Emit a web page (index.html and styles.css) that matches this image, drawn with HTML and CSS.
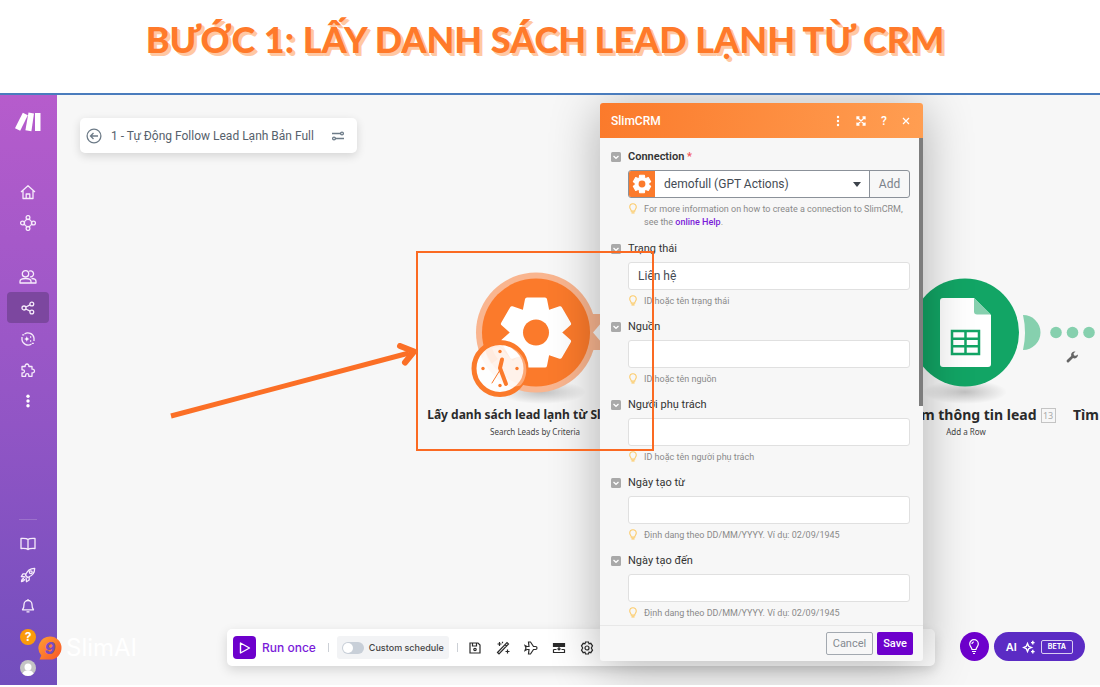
FILE: index.html
```html
<!DOCTYPE html>
<html lang="vi">
<head>
    <meta charset="UTF-8">
    <meta name="viewport" content="width=device-width, initial-scale=1.0">
    <title>Bước 1: Lấy danh sách lead lạnh từ CRM</title>
    <link rel="stylesheet" href="styles.css">
</head>
<body>
    <svg class="defs" aria-hidden="true">
        <symbol id="gear" viewBox="-38 -38 76 76">
            <g fill="#fff" stroke="#fff" stroke-width="4" stroke-linejoin="round">
                <circle r="22"/>
                <path d="M-9-33H9L12-18V18L9 33H-9L-12 18V-18z"/>
                <path d="M-9-33H9L12-18V18L9 33H-9L-12 18V-18z" transform="rotate(60)"/>
                <path d="M-9-33H9L12-18V18L9 33H-9L-12 18V-18z" transform="rotate(120)"/>
            </g>
            <circle r="13" fill="#fb7a2b"/>
        </symbol>
        <symbol id="bulb" viewBox="0 0 10 14">
            <path d="M3 9.500C3 7.500 1.200 7 1.200 4.600a3.800 3.800 0 0 1 7.600 0C8.800 7 7 7.500 7 9.500z" fill="none" stroke="#fccb6b" stroke-width="1.300"/>
            <path d="M3.200 11.500h3.600" stroke="#fccb6b" stroke-width="1.600"/>
        </symbol>
        <symbol id="chevron" viewBox="0 0 10 10">
            <rect width="10" height="10" rx="1.500" fill="#a9a9a9"/>
            <path d="M2.500 4l2.500 2.300L7.500 4" fill="none" stroke="#fff" stroke-width="1.300"/>
        </symbol>
    </svg>

    <header class="page-header">
        <h1 class="title">BƯỚC 1: LẤY DANH SÁCH LEAD LẠNH TỪ CRM</h1>
    </header>

    <main class="app">
        <nav class="sidebar" aria-label="Menu">
            <a href="#" class="logo" aria-label="Make">
                <svg width="28" height="20" viewBox="0 0 28 20" fill="#fff">
                    <path d="M8.800 .8l5 2.400-7.600 15.500L1 16.200z"/>
                    <path d="M14.500 .5l5.500 1-2.600 17.800-6-1.100z"/>
                    <path d="M21 1h5.500v18H21z"/>
                </svg>
            </a>
            <a href="#" class="nav-item" aria-label="Home">
                <svg width="16" height="16" viewBox="0 0 16 16"><path d="M1 8l7-6.300L15 8M3 6.500v8h10v-8M6.200 14.500V10h3.600v4.500"/></svg>
            </a>
            <a href="#" class="nav-item" aria-label="Organization">
                <svg width="16" height="16" viewBox="0 0 16 16"><circle cx="8" cy="8" r="3.600"/><circle cx="8" cy="2.500" r="1.900"/><circle cx="8" cy="13.500" r="1.900"/><circle cx="2.500" cy="8" r="1.900"/><circle cx="13.500" cy="8" r="1.900"/></svg>
            </a>
            <a href="#" class="nav-item group-start" aria-label="Team">
                <svg width="18" height="16" viewBox="0 0 18 16"><circle cx="6.500" cy="4.800" r="3.200"/><path d="M1 14v-1.500c0-2 2-3 5.500-3s5.500 1 5.500 3V14zM10 2.300a3 3 0 1 1 1 5.500M12.500 9.500c3 0 4.500 1 4.500 3V14h-5"/></svg>
            </a>
            <a href="#" class="nav-item active" aria-label="Scenarios">
                <svg width="14" height="14" viewBox="0 0 14 14"><circle cx="3" cy="7" r="2"/><circle cx="10.800" cy="3" r="1.900"/><circle cx="10.800" cy="11" r="1.900"/><path d="M4.800 6l4.300-2.100M4.800 8l4.300 2.100"/></svg>
            </a>
            <a href="#" class="nav-item" aria-label="AI Agents">
                <svg width="14" height="14" viewBox="0 0 14 14"><path d="M3.500 2A6.200 6.200 0 0 1 13 6v3M10.500 12A6.200 6.200 0 0 1 1 8V5"/><path d="M5.800 4.300l.8 1.900 1.900.8-1.900.8-.8 1.900-.8-1.900L3.100 7 5 6.200z" fill="#fff" stroke="none"/><path d="M1.200 2.800h2M10.800 11.300h2M9 5h1.200M9 9h1.200"/></svg>
            </a>
            <a href="#" class="nav-item" aria-label="Templates">
                <svg width="16" height="16" viewBox="0 0 16 16"><path d="M2 4.500h3.200a1.900 1.900 0 1 1 3.600 0H12V7.200a1.900 1.900 0 1 1 0 3.600v3.500H8.800v-1a1.600 1.600 0 0 0-3.200 0v1H2v-3.500h1a1.500 1.500 0 0 0 0-3H2z"/></svg>
            </a>
            <a href="#" class="nav-item" aria-label="More">
                <svg width="4" height="14" viewBox="0 0 4 14"><g fill="#fff" stroke="none"><circle cx="2" cy="2.200" r="1.700"/><circle cx="2" cy="7" r="1.700"/><circle cx="2" cy="11.800" r="1.700"/></g></svg>
            </a>
            <div class="nav-bottom">
                <a href="#" class="nav-item" aria-label="Docs">
                    <svg width="16" height="14" viewBox="0 0 16 14"><path d="M8 2.500C7 1.500 5 1.300 1 1.500v10c4-.2 6 0 7 1 1-1 3-1.200 7-1v-10c-4-.2-6 0-7 1zM8 2.500v10"/></svg>
                </a>
                <a href="#" class="nav-item" aria-label="What's new">
                    <svg width="16" height="16" viewBox="0 0 16 16"><path d="M5.500 8.300C7 4 10 1.200 14.700 1.300c.1 4.700-2.700 7.700-7 9.200zM6.200 6.800H3L1.300 9.500l4 .5M9.200 9.800V13l-2.700 1.700L6 10.700"/><circle cx="10.800" cy="5.200" r="1.400"/><path d="M4 11.500c-1.500 0-2.300 1.500-2.500 3 1.500-.2 3-1 3-2.500"/></svg>
                </a>
                <a href="#" class="nav-item" aria-label="Notifications">
                    <svg width="14" height="16" viewBox="0 0 14 16"><path d="M1.500 11.800c1-1 1.500-2 1.500-5.300a4 4 0 0 1 8 0c0 3.300.5 4.300 1.500 5.300zM5.500 13.800h3M7 1v1.500"/></svg>
                </a>
                <a href="#" class="nav-item" aria-label="Help"><span class="help-badge">?</span></a>
                <a href="#" class="nav-item" aria-label="Profile">
                    <svg width="16" height="16" viewBox="0 0 16 16"><g stroke="none"><circle cx="8" cy="8" r="8" fill="#c4c4c4"/><circle cx="8" cy="7" r="3.500" fill="#fff"/><path d="M2.500 13.800C3.500 11 5.500 10.300 8 10.300s4.500.7 5.500 3.500A8 8 0 0 1 8 16a8 8 0 0 1-5.500-2.200z" fill="#fff"/></g></svg>
                </a>
            </div>
        </nav>

        <section class="canvas">
            <div class="scenario-bar">
                <button class="icon-btn" aria-label="Back">
                    <svg width="16" height="16" viewBox="0 0 16 16" fill="none" stroke="#6d7b88" stroke-width="1.300"><circle cx="8" cy="8" r="6.900"/><path d="M12 8H4.500M7.500 5l-3 3 3 3"/></svg>
                </button>
                <span class="scenario-name">1 - Tự Động Follow Lead Lạnh Bản Full</span>
                <button class="icon-btn" aria-label="Options">
                    <svg width="14" height="10" viewBox="0 0 14 10" fill="none" stroke="#6d7b88" stroke-width="1.300"><path d="M1 2.500h9M4 7.500h9"/><circle cx="11" cy="2.500" r="1.400"/><circle cx="3" cy="7.500" r="1.400"/></svg>
                </button>
            </div>

            <!-- scenario modules -->
            <div class="module module-crm">
                <svg width="260" height="140" viewBox="405 265 260 140">
                    <defs>
                        <radialGradient id="shade"><stop offset="0" stop-color="#000" stop-opacity=".22"/><stop offset="1" stop-color="#000" stop-opacity="0"/></radialGradient>
                    </defs>
                    <ellipse cx="542" cy="392" rx="44" ry="12" fill="url(#shade)"/>
                    <path d="M588 314h25v36h-25z" fill="#f9b58f"/>
                    <circle cx="536" cy="332.500" r="60" fill="#f9b58f"/>
                    <path d="M593 332.500l12-14v28z" fill="#f7f7f7"/>
                    <circle cx="536" cy="332.500" r="54" fill="#fb7a2b"/>
                    <use href="#gear" x="498" y="294.500" width="76" height="76"/>
                    <circle cx="500" cy="368.500" r="26" fill="#fff" fill-opacity=".85" stroke="#fb7a2b" stroke-width="5"/>
                    <path d="M481 360a54 54 0 0 0 20 21c8 5 15 7 20 4a24 24 0 0 0-17-39l-4 0c5 5 10 8 18 10l-5 5-13-14-8 1c2 5 3 8 6 11l-7 5c-3-4-5-8-5-13z" fill="#fff" fill-opacity=".35"/>
                    <g fill="#fb7a2b"><circle cx="500" cy="351.500" r="1.700"/><circle cx="517" cy="368.500" r="1.700"/><circle cx="500" cy="385.500" r="1.700"/><circle cx="483" cy="368.500" r="1.700"/></g>
                    <g fill="none" stroke="#fb7a2b" stroke-linecap="round"><path d="M502 359.500l-2 8.500 6 16" stroke-width="4" stroke-linejoin="round"/><path d="M500 370l-8 13" stroke-width="1"/></g>
                </svg>
                <div class="module-name">Lấy danh sách lead lạnh từ SlimCRM</div>
                <div class="module-action">Search Leads by Criteria</div>
            </div>

            <div class="module module-sheets">
                <svg width="260" height="140" viewBox="836 265 260 140">
                    <ellipse cx="965" cy="392" rx="42" ry="12" fill="url(#shade)"/>
                    <circle cx="965" cy="332.500" r="54" fill="#12a565"/>
                    <path d="M943 298h31l17 17v49a3 3 0 0 1-3 3h-45a3 3 0 0 1-3-3v-63a3 3 0 0 1 3-3z" fill="#fff"/>
                    <path d="M974 298l17 16.500h-14a3 3 0 0 1-3-3z" fill="#86d0ae"/>
                    <path d="M952 331h27v23h-27zM952 338.700h27M952 346.300h27M965.500 331v23" fill="none" stroke="#12a565" stroke-width="2.500"/>
                    <path d="M1023 315a17.500 17.500 0 0 1 0 35q4-17.500 0-35z" fill="#86d0ae"/>
                    <g fill="#86d0ae"><circle cx="1056" cy="332.500" r="5.800"/><circle cx="1072.500" cy="332.500" r="5.800"/><circle cx="1089" cy="332.500" r="5.800"/></g>
                    <path d="M1078 354.500a3.600 3.600 0 0 1-5 3.600l-4 4a1.300 1.300 0 0 1-2-2l4.200-4a3.600 3.600 0 0 1 4.300-4.500l-2 2 .5 1.800 1.800.3z" fill="#666"/>
                </svg>
                <div class="module-name">Thêm thông tin lead<span class="module-id">13</span></div>
                <div class="module-action">Add a Row</div>
            </div>

            <div class="module module-next">
                <div class="module-name">Tìm</div>
            </div>

            <!-- bottom toolbar -->
            <div class="toolbar">
                <button class="run-btn">
                    <span class="run-icon"><svg width="12" height="14" viewBox="0 0 12 14" fill="none" stroke="#fff" stroke-width="1.400" stroke-linejoin="round"><path d="M1.500 2l9 5-9 5z"/></svg></span>
                    Run once
                </button>
                <span class="divider"></span>
                <label class="schedule">
                    <input type="checkbox" class="switch">
                    Custom schedule
                </label>
                <span class="divider"></span>
                <div class="tools">
                    <button class="icon-btn" aria-label="Save scenario"><svg width="14" height="14" viewBox="0 0 14 14"><path d="M2 2h8l2 2v8H2zM4.500 2v3h4V2"/><circle cx="7" cy="8.500" r="1.200"/></svg></button>
                    <button class="icon-btn" aria-label="Auto-align"><svg width="14" height="14" viewBox="0 0 14 14"><path d="M1.500 11.500l9.500-10 1.500 1.500-9.500 10zM9 3.500L10.500 5M3.500 1v4M1.500 3h4M6.500.8v1.500M11.500 8.500v4M9.500 10.500h4"/></svg></button>
                    <button class="icon-btn" aria-label="Explain flow"><svg width="14" height="14" viewBox="0 0 14 14"><path d="M1 4.500l2 1h2L4.500 1h2l3 4.500h2c2 0 2 3 0 3h-2l-3 4.500h-2L5 8.500H3l-2 1L2 7z"/></svg></button>
                    <button class="icon-btn" aria-label="Notes"><svg width="14" height="14" viewBox="0 0 14 14"><path d="M1.500 2.500h11v3h-11z" fill="#2b2b2b"/><path d="M7 5v3.500M5.500 7.500L7 9l1.500-1.500M1.500 8.500h3M9.500 8.500h3M1.500 8.500v3h11v-3"/></svg></button>
                    <button class="icon-btn" aria-label="Settings"><svg width="14" height="14" viewBox="0 0 14 14"><path d="M5.500 1h3l.5 1.800 1.800-.5 1.700 2.500L11.300 7l1.200 2.200-1.700 2.500-1.800-.5-.5 1.800h-3L5 11.200l-1.800.5-1.700-2.500L2.700 7 1.500 4.800l1.700-2.500 1.800.5z"/><circle cx="7" cy="7" r="2"/></svg></button>
                </div>
            </div>

            <div class="assist">
                <button class="tips-btn" aria-label="Tips">
                    <svg width="12" height="16" viewBox="0 0 12 16" fill="none" stroke="#fff" stroke-width="1.200"><path d="M4 10.500C4 8.500 1.700 7.500 1.700 5a4.300 4.300 0 0 1 8.600 0c0 2.500-2.300 3.500-2.300 5.500zM4 12.500h4M5 14.500h2M4 5a2 2 0 0 1 2-2"/></svg>
                </button>
                <button class="ai-btn">
                    AI
                    <svg width="14" height="14" viewBox="0 0 14 14" fill="none" stroke="#fff" stroke-width="1.400"><path d="M5.500 3.500L6.700 6.300l2.800 1.200-2.800 1.200-1.200 2.800-1.200-2.800L1.500 7.500l2.800-1.200z"/><path d="M10.800.8v3.600M9 2.600h3.600M10.800 9.800v3.600M9 11.600h3.600"/></svg>
                    <span class="beta">BETA</span>
                </button>
            </div>

            <!-- module settings -->
            <form class="dialog">
                <div class="dialog-header">
                    <h2 class="dialog-title">SlimCRM</h2>
                    <button type="button" class="icon-btn" aria-label="Menu"><svg width="4" height="12" viewBox="0 0 4 12" fill="#fff"><circle cx="2" cy="2" r="1.200"/><circle cx="2" cy="6" r="1.200"/><circle cx="2" cy="10" r="1.200"/></svg></button>
                    <button type="button" class="icon-btn" aria-label="Expand"><svg width="10" height="10" viewBox="0 0 10 10" fill="none" stroke="#fff" stroke-width="1.300"><path d="M1 3.500V1h2.500M6.500 1H9v2.500M9 6.500V9H6.500M3.500 9H1V6.500M1 1l8 8M9 1L1 9"/></svg></button>
                    <button type="button" class="icon-btn" aria-label="Help">?</button>
                    <button type="button" class="icon-btn" aria-label="Close"><svg width="8" height="8" viewBox="0 0 8 8" stroke="#fff" stroke-width="1.200"><path d="M1 1l6 6M7 1L1 7"/></svg></button>
                </div>
                <div class="dialog-body">
                    <div class="field">
                        <svg class="chevron" width="10" height="10"><use href="#chevron"/></svg>
                        <label class="field-label required" for="connection">Connection</label>
                        <div class="connection">
                            <span class="connection-icon"><svg width="20" height="20"><use href="#gear"/></svg></span>
                            <select id="connection" class="connection-select">
                                <option>demofull (GPT Actions)</option>
                            </select>
                            <button type="button" class="add-btn">Add</button>
                        </div>
                        <p class="hint"><svg width="10" height="12"><use href="#bulb"/></svg><span>For more information on how to create a connection to SlimCRM, see the <a href="#">online Help</a>.</span></p>
                    </div>
                    <div class="field">
                        <svg class="chevron" width="10" height="10"><use href="#chevron"/></svg>
                        <label class="field-label" for="status">Trạng thái</label>
                        <input type="text" class="field-input" id="status" value="Liên hệ">
                        <p class="hint"><svg width="10" height="12"><use href="#bulb"/></svg><span>ID hoặc tên trạng thái</span></p>
                    </div>
                    <div class="field">
                        <svg class="chevron" width="10" height="10"><use href="#chevron"/></svg>
                        <label class="field-label" for="source">Nguồn</label>
                        <input type="text" class="field-input" id="source">
                        <p class="hint"><svg width="10" height="12"><use href="#bulb"/></svg><span>ID hoặc tên nguồn</span></p>
                    </div>
                    <div class="field">
                        <svg class="chevron" width="10" height="10"><use href="#chevron"/></svg>
                        <label class="field-label" for="owner">Người phụ trách</label>
                        <input type="text" class="field-input" id="owner">
                        <p class="hint"><svg width="10" height="12"><use href="#bulb"/></svg><span>ID hoặc tên người phụ trách</span></p>
                    </div>
                    <div class="field">
                        <svg class="chevron" width="10" height="10"><use href="#chevron"/></svg>
                        <label class="field-label" for="date-from">Ngày tạo từ</label>
                        <input type="text" class="field-input" id="date-from">
                        <p class="hint"><svg width="10" height="12"><use href="#bulb"/></svg><span>Định dang theo DD/MM/YYYY. Ví dụ: 02/09/1945</span></p>
                    </div>
                    <div class="field">
                        <svg class="chevron" width="10" height="10"><use href="#chevron"/></svg>
                        <label class="field-label" for="date-to">Ngày tạo đến</label>
                        <input type="text" class="field-input" id="date-to">
                        <p class="hint"><svg width="10" height="12"><use href="#bulb"/></svg><span>Định dang theo DD/MM/YYYY. Ví dụ: 02/09/1945</span></p>
                    </div>
                    <span class="scroll-thumb"></span>
                </div>
                <div class="dialog-footer">
                    <button type="button" class="cancel-btn">Cancel</button>
                    <button type="submit" class="save-btn">Save</button>
                </div>
            </form>

            <!-- annotations -->
            <div class="highlight"></div>
            <svg class="arrow" width="250" height="76" viewBox="168 343 250 76" fill="none" stroke="#fb6f26">
                <path d="M171 416l238-63" stroke-width="5"/>
                <path d="M400 346l14 5.500-9 11" stroke-width="6" stroke-linecap="round" stroke-linejoin="round"/>
            </svg>
        </section>

        <div class="watermark">
            <svg width="24" height="24" viewBox="0 0 24 24">
                <defs><linearGradient id="flame" x1="0" y1="0" x2="1" y2="1"><stop offset="0" stop-color="#ffa030"/><stop offset="1" stop-color="#f9552b"/></linearGradient></defs>
                <path d="M12 .5A11.500 11.500 0 1 1 12 23.500H1.500l1.800-4A11.500 11.500 0 0 1 12 .5z" fill="url(#flame)"/>
                <text x="12" y="18" class="watermark-nine">9</text>
            </svg>
            <span>SlimAI</span>
        </div>
    </main>
</body>
</html>
```
FILE: styles.css
```css
* {
    margin: 0;
    padding: 0;
    box-sizing: border-box;
}

body {
    font-family: Inter, 'Liberation Sans', sans-serif;
    background: #fff;
    min-height: 100vh;
    display: flex;
    flex-direction: column;
    color: #333;
    overflow: hidden;
}

button {
    font-family: inherit;
    border: none;
    background: none;
    cursor: pointer;
}

svg {
    display: block;
    flex-shrink: 0;
}

.defs {
    position: absolute;
    width: 0;
    height: 0;
}

.page-header {
    height: 95px;
    padding: 17px 10px 0 0;
    border-bottom: 2px solid #4a7cbd;
    text-align: center;
}

.title {
    font-family: Lato, sans-serif;
    font-size: 36px;
    line-height: 44px;
    font-weight: 900;
    color: #ff7a2a;
    text-shadow: 2px 2px 0 #ffc8a3, 3px 3px 0 #ffc8a3;
    white-space: nowrap;
}

.app {
    flex: 1;
    display: flex;
    position: relative;
    margin-bottom: 2px;
}

/* sidebar */
.sidebar {
    width: 57px;
    display: flex;
    flex-direction: column;
    padding: 16px 8px 2px 7px;
    background: linear-gradient(180deg, #b65ccc 0%, #9556c6 50%, #724ebd 100%);
}

.logo {
    height: 65px;
    padding: 1px 0 0 7px;
}

.nav-item {
    height: 31px;
    display: flex;
    align-items: center;
    justify-content: center;
    border-radius: 4px;
    text-decoration: none;
}

.nav-item svg {
    fill: none;
    stroke: #f6ebfb;
    stroke-width: 1.3;
    stroke-linejoin: round;
}

.nav-item.group-start {
    margin-top: 23px;
}

.nav-item.active {
    background: #7c479f;
}

.nav-bottom {
    margin-top: auto;
}

.nav-bottom::before {
    content: '';
    display: block;
    width: 18px;
    height: 1px;
    margin: 0 auto 8px;
    background: #9c71cb;
}

.help-badge {
    width: 16px;
    height: 16px;
    border-radius: 50%;
    background: #fb9a0b;
    color: #fff;
    font-size: 12px;
    line-height: 16px;
    font-weight: 700;
    text-align: center;
}

/* canvas */
.canvas {
    flex: 1;
    position: relative;
    overflow: hidden;
    background: #f7f7f7;
}

.scenario-bar {
    position: absolute;
    left: 23px;
    top: 23px;
    height: 35px;
    padding: 0 12px 0 6px;
    display: flex;
    align-items: center;
    gap: 9px;
    background: #fff;
    border-radius: 5px;
    box-shadow: 0 3px 10px rgba(0, 0, 0, 0.14);
}

.scenario-name {
    font-family: Roboto, sans-serif;
    font-size: 12px;
    color: #56616c;
    margin-right: 8px;
}

.icon-btn {
    display: flex;
    align-items: center;
    justify-content: center;
}

.module {
    position: absolute;
    width: 260px;
    text-align: center;
    font-family: 'Noto Sans', 'Open Sans', sans-serif;
    white-space: nowrap;
}

.module-crm {
    left: 348px;
    top: 170px;
}

.module-sheets {
    left: 779px;
    top: 170px;
}

.module-next {
    left: 1016px;
    top: 310px;
    width: auto;
}

.module-name {
    font-size: 14px;
    line-height: 20px;
    font-weight: 700;
    color: #2b2b2b;
}

.module-crm .module-name {
    font-size: 12px;
}

.module-id {
    position: absolute;
    margin: 3px 0 0 4px;
    width: 15px;
    height: 15px;
    border: 1px solid #c4c4c4;
    font-size: 9px;
    line-height: 13px;
    font-weight: 400;
    color: #aaa;
    text-align: center;
}

.module-action {
    font-size: 8px;
    line-height: 14px;
    color: #444;
}

/* toolbar */
.toolbar {
    position: absolute;
    left: 170px;
    right: 165px;
    bottom: 19px;
    height: 37px;
    padding: 0 6px;
    display: flex;
    align-items: center;
    background: #fff;
    border-radius: 5px;
    box-shadow: 0 4px 12px rgba(0, 0, 0, 0.14);
}

.run-btn {
    display: flex;
    align-items: center;
    gap: 6px;
    font-size: 12px;
    font-weight: 500;
    color: #7a1bd9;
}

.run-icon {
    width: 23px;
    height: 23px;
    display: flex;
    align-items: center;
    justify-content: center;
    background: #6d00cc;
    border-radius: 4px;
}

.divider {
    width: 1px;
    height: 9px;
    margin: 0 8px 0 12px;
    background: #ccd0d6;
}

.schedule {
    height: 23px;
    padding: 0 5px;
    display: flex;
    align-items: center;
    gap: 5px;
    background: #f2f3f5;
    border-radius: 3px;
    font-size: 9px;
    font-weight: 500;
    color: #444;
}

.schedule + .divider {
    margin: 0 10px 0 8px;
}

.switch {
    appearance: none;
    width: 22px;
    height: 12px;
    padding: 1px;
    border-radius: 6px;
    background: #c8cfd8;
}

.switch::before {
    content: '';
    display: block;
    width: 10px;
    height: 10px;
    border-radius: 50%;
    background: #fff;
}

.tools {
    display: flex;
    gap: 14px;
}

.tools svg {
    fill: none;
    stroke: #2b2b2b;
    stroke-width: 1.2;
}

.assist {
    position: absolute;
    right: 15px;
    bottom: 24px;
    display: flex;
    gap: 5px;
}

.tips-btn {
    width: 29px;
    height: 29px;
    display: flex;
    align-items: center;
    justify-content: center;
    border-radius: 50%;
    background: #6d00cc;
}

.ai-btn {
    height: 29px;
    padding: 0 12px;
    display: flex;
    align-items: center;
    gap: 5px;
    border-radius: 15px;
    background: #5b2bc4;
    color: #fff;
    font-size: 11px;
    font-weight: 600;
}

.beta {
    padding: 0 6px;
    border: 1px solid #d9ccf2;
    border-radius: 2px;
    font-size: 7px;
    line-height: 12px;
    font-weight: 700;
}

/* dialog */
.dialog {
    position: absolute;
    left: 543px;
    top: 8px;
    bottom: 24px;
    width: 323px;
    display: flex;
    flex-direction: column;
    background: #f7f7f7;
    border-radius: 3px;
    box-shadow: 0 6px 50px rgba(0, 0, 0, 0.3);
    font-family: Roboto, sans-serif;
    overflow: hidden;
}

.dialog-header {
    height: 35px;
    padding: 0 13px 0 11px;
    display: flex;
    align-items: center;
    gap: 14px;
    background: linear-gradient(100deg, #fb7a2b, #ff9e52);
    color: #fff;
}

.dialog-header .icon-btn {
    min-width: 8px;
    color: #fff;
    font-size: 12px;
    font-weight: 500;
}

.dialog-title {
    flex: 1;
    font-size: 12px;
    font-weight: 500;
}

.dialog-body {
    flex: 1;
    position: relative;
    min-height: 0;
    padding: 10px 13px 0 11px;
    overflow: hidden;
}

.field {
    display: grid;
    grid-template-columns: 17px 1fr;
    align-items: center;
    margin-bottom: 10px;
}

.field:first-child {
    margin-bottom: 11px;
}

.field > :not(.chevron):not(.field-label) {
    grid-column: 2;
}

.field-label {
    font-size: 11px;
    line-height: 18px;
    color: #333;
    margin-bottom: 4px;
}

.chevron {
    margin-bottom: 4px;
}

.field-label.required {
    font-weight: 600;
}

.field-label.required::after {
    content: ' *';
    color: #f2545b;
}

.field-input {
    width: 100%;
    height: 28px;
    padding: 0 9px;
    border: 1px solid #e0e0e0;
    border-radius: 3px;
    background: #fff;
    font-family: inherit;
    font-size: 12px;
    color: #444b54;
}

.connection {
    position: relative;
    height: 28px;
    display: flex;
    border: 1px solid #8b9199;
    border-radius: 3px;
    overflow: hidden;
}

/* select arrow */
.connection::after {
    content: '';
    position: absolute;
    right: 48px;
    top: 11px;
    border: 4px solid transparent;
    border-top: 5px solid #3c434b;
    border-bottom: none;
    pointer-events: none;
}

.connection-icon {
    width: 26px;
    display: flex;
    align-items: center;
    justify-content: center;
    background: #fb7a2b;
}

.connection-select {
    flex: 1;
    appearance: none;
    padding: 0 9px;
    border: none;
    background: #fff;
    font-family: inherit;
    font-size: 12px;
    color: #444b54;
}

.add-btn {
    width: 40px;
    border-left: 1px solid #8b9199;
    font-size: 12px;
    color: #7b828a;
}

.hint {
    display: flex;
    gap: 6px;
    margin-top: 5px;
    font-size: 9px;
    line-height: 13px;
    color: #8a8a8a;
}

.hint a {
    color: #7a1bd9;
    font-weight: 500;
    text-decoration: none;
}

.scroll-thumb {
    position: absolute;
    right: 0;
    top: 0;
    width: 4px;
    height: 55%;
    background: #7d7d7d;
}

.dialog-footer {
    height: 36px;
    padding: 0 10px 1px;
    display: flex;
    align-items: center;
    justify-content: flex-end;
    gap: 4px;
    border-top: 1px solid #e8e8e8;
}

.cancel-btn,
.save-btn {
    height: 23px;
    padding: 0 6px;
    border-radius: 2px;
    font-size: 11px;
}

.cancel-btn {
    border: 1px solid #a3a9b0;
    color: #858b92;
}

.save-btn {
    background: #6d00cc;
    color: #fff;
    font-weight: 500;
}

/* annotations */
.highlight {
    position: absolute;
    left: 359px;
    top: 156px;
    width: 238px;
    height: 200px;
    border: 2px solid #fb6a22;
}

.arrow {
    position: absolute;
    left: 111px;
    top: 248px;
}

.watermark {
    position: absolute;
    left: 38px;
    bottom: 25px;
    display: flex;
    align-items: center;
    gap: 4px;
    font-size: 24px;
    line-height: 24px;
    color: #fff;
}

.watermark-nine {
    font-size: 16px;
    font-weight: 800;
    font-style: italic;
    text-anchor: middle;
    fill: #7a4cbf;
}
```
